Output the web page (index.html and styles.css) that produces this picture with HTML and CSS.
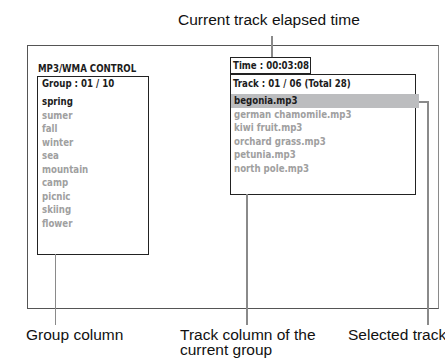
FILE: index.html
```html
<!DOCTYPE html>
<html>
<head>
<meta charset="utf-8">
<link rel="stylesheet" href="styles.css">
</head>
<body>
<div class="figure">
  <div class="screen">
    <div class="col-left">
      <div class="title">MP3/WMA CONTROL</div>
      <div class="group-box">
        <div class="head">Group : 01 / 10</div>
        <ul class="list">
          <li class="on">spring</li>
          <li>sumer</li>
          <li>fall</li>
          <li>winter</li>
          <li>sea</li>
          <li>mountain</li>
          <li>camp</li>
          <li>picnic</li>
          <li>skiing</li>
          <li>flower</li>
        </ul>
      </div>
    </div>
    <div class="col-right">
      <div class="time-box">Time : 00:03:08</div>
      <div class="track-box">
        <div class="head">Track : 01 / 06 (Total 28)</div>
        <ul class="list">
          <li class="on sel">begonia.mp3</li>
          <li>german chamomile.mp3</li>
          <li>kiwi fruit.mp3</li>
          <li>orchard grass.mp3</li>
          <li>petunia.mp3</li>
          <li>north pole.mp3</li>
        </ul>
      </div>
    </div>
  </div>

  <div class="label label-top">Current track elapsed time</div>
  <div class="lead lead-top"></div>

  <div class="lead lead-group"></div>
  <div class="lead lead-track"></div>
  <div class="lead lead-sel-h"></div>
  <div class="lead lead-sel-v"></div>

  <div class="label label-group">Group column</div>
  <div class="label label-track">Track column of the<br>current group</div>
  <div class="label label-sel">Selected track</div>
</div>
</body>
</html>
```
FILE: styles.css
```css
html, body {
  margin: 0;
  padding: 0;
  background: #ffffff;
}

.figure {
  position: relative;
  width: 445px;
  height: 360px;
  overflow: hidden;
}

.screen {
  margin: 45px 0 0 27px;
  width: 412px;
  height: 264px;
  border: 1px solid #555;
  border-right-color: #8a8a8a;
  padding: 11px 0 0 9px;
  box-sizing: border-box;
  display: flex;
  align-items: flex-start;
  font-family: "DejaVu Sans Condensed", "DejaVu Sans", sans-serif;
  font-weight: bold;
  font-size: 9.6px;
  color: #1c1c1c;
}

.col-left {
  width: 112px;
  flex: none;
  display: flex;
  flex-direction: column;
}

.title {
  height: 19px;
  line-height: 12px;
  padding: 6px 0 0 1px;
  box-sizing: border-box;
  white-space: nowrap;
}

.group-box {
  width: 112px;
  height: 179px;
  border: 1px solid #222;
  box-sizing: border-box;
  padding: 0 0 0 4px;
}

.head {
  line-height: 13px;
  white-space: nowrap;
}

.list {
  list-style: none;
  margin: 5px 0 0 0;
  padding: 0;
}

.list li {
  height: 13.5px;
  line-height: 13.5px;
  color: #a0a0a0;
  white-space: nowrap;
}

.list li.on {
  color: #1c1c1c;
}

.col-right {
  margin-left: 81px;
  flex: none;
  display: flex;
  flex-direction: column;
}

.time-box {
  width: 81px;
  height: 17px;
  border: 1px solid #222;
  box-sizing: border-box;
  line-height: 15px;
  padding-left: 2px;
  white-space: nowrap;
}

.track-box {
  width: 186px;
  height: 121px;
  border: 1px solid #222;
  box-sizing: border-box;
}

.track-box .head {
  padding: 2px 0 0 2px;
}

.track-box .list {
  margin-top: 4px;
}

.track-box .list li {
  padding-left: 3px;
}

.track-box .list li.sel {
  background: #bcbdbf;
  margin-right: -4px;
  position: relative;
}

.label {
  position: absolute;
  font-family: "Liberation Sans", Arial, sans-serif;
  font-size: 15.5px;
  line-height: 15px;
  color: #111;
  white-space: nowrap;
}

.label-top { left: 178px; top: 12px; }
.label-group { left: 26px; top: 327px; }
.label-track { left: 180px; top: 327px; }
.label-sel { left: 348px; top: 327px; }

.lead {
  position: absolute;
  background: #8a8a8a;
}

.lead-top { left: 271px; top: 36px; width: 1.5px; height: 21px; }
.lead-group { left: 54.5px; top: 254px; width: 1.5px; height: 71px; }
.lead-track { left: 246px; top: 194px; width: 1.5px; height: 131px; }
.lead-sel-h { left: 419px; top: 101px; width: 9px; height: 1.5px; }
.lead-sel-v { left: 427px; top: 101px; width: 1.5px; height: 224px; }
```
